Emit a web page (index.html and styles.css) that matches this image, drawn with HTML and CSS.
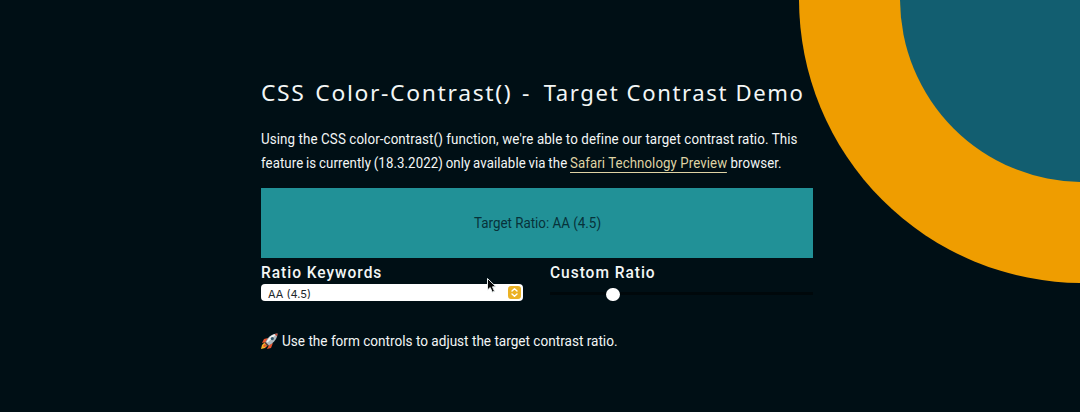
FILE: index.html
```html
<!DOCTYPE html>
<html lang="en">
<head>
<meta charset="utf-8">
<title>CSS Color-Contrast() - Target Contrast Demo</title>
<link rel="stylesheet" href="styles.css">
</head>
<body>
<svg class="ring" width="281" height="284" viewBox="0 0 281 284"><circle cx="284" cy="-1" r="284" fill="#ef9d00"/><circle cx="284" cy="-1" r="183" fill="#125e70"/></svg>
<main class="demo">
  <h1 class="title"><span class="title-start">CSS Color-Contrast() - </span><span class="title-end">Target Contrast Demo</span></h1>
  <p class="intro"><span class="line-one">Using the CSS color-contrast() function, we're able to define our target contrast ratio. This</span><br><span class="line-two"><span class="lead">feature is currently (18.3.2022) only available via the </span><a class="link">Safari Technology Preview</a> browser.</span></p>
  <div class="swatch"><span>Target Ratio: AA (4.5)</span></div>
  <div class="controls">
    <div class="field">
      <div class="label"><span>Ratio Keywords</span></div>
      <div class="select"><span>AA (4.5)</span>
        <svg class="stepper" width="13" height="13" viewBox="0 0 13 13"><path d="M4 5 6.5 2.7 9 5M4 8 6.5 10.3 9 8"/></svg>
      </div>
    </div>
    <div class="field">
      <div class="label"><span>Custom Ratio</span></div>
      <div class="slider"><div class="thumb"></div></div>
    </div>
  </div>
  <p class="hint">
    <svg class="rocket" width="17" height="17" viewBox="0 0 17 17">
      <path fill="#f7b52b" d="M4 9 1 12 0 16 4 15 6 13Z"/>
      <path fill="#e9532c" d="M7 5 3 6 1 10 5 9ZM12 10 10 15 6 16 8 12ZM4 11 2 13 3 14 6 13Z"/>
      <path fill="#aeb8bd" d="M16.5.5C12 .6 9 2.6 6.600 5.600L4 10 7 13 11 10.400C14.500 7.500 16.300 5 16.500.5Z"/>
      <path fill="#f1f3f3" d="M14 1C10.500 1.800 8 4.500 5.500 8.500L6.500 9.500 14.500 2Z"/>
      <path fill="#c94a35" d="M16.500.5 13.500 1 16 3.500Z"/>
      <circle cx="11.300" cy="5.600" r="1.600" fill="#31576b"/>
      <path fill="#5c3830" d="M4.500 9 8 12.500 7 13.500 3.500 10Z"/>
    </svg><span>Use the form controls to adjust the target contrast ratio.</span></p>
</main>
<svg class="cursor" width="12" height="17" viewBox="0 0 12 17"><path d="M1.500 1.500V13L4.200 10.600 6.300 15.200 8.500 14.200 6.500 9.800H10Z"/></svg>
</body>
</html>
```
FILE: styles.css
```css
body { margin: 0; height: 412px; position: relative; overflow: hidden; background: #000f15; color: #f3f6f6; font-family: Roboto, "Liberation Sans", sans-serif; font-size: 14px; }
.ring { position: absolute; right: 0; top: 0; }
.demo { position: relative; box-sizing: border-box; width: 552px; margin-left: 261px; padding-top: 77px; white-space: nowrap; }
.title { display: flex; justify-content: space-between; width: 544px; margin: 0; height: 51px; font: 400 22px/30px "Noto Sans", sans-serif; letter-spacing: 1.6px; }
.line-one, .line-two, .swatch span, .label span, .hint span { display: inline-block; transform-origin: left; }
.title-start { transform: scaleX(1.04); transform-origin: left; word-spacing: 2px; }
.title-end { transform: scaleX(1.005); transform-origin: right; }
.intro { margin: 0; height: 60px; line-height: 23.5px; letter-spacing: .1px; }
.line-one { transform: scaleX(.954); }
.line-two { transform: scaleX(.945); }
.lead { word-spacing: -.7px; }
.link { color: #dfd3a4; border-bottom: 1px solid #dfd3a4; padding-bottom: 1px; }
.swatch { display: flex; align-items: center; justify-content: center; height: 70px; background: #219197; color: #07323a; }
.swatch span { transform: scaleX(.955); transform-origin: center; padding-left: 1px; }
.controls { display: grid; grid-template-columns: 262px 263px; column-gap: 27px; height: 69px; }
.label { height: 26px; font-size: 16px; font-weight: 500; line-height: 29px; letter-spacing: 1px; }
.label span { transform: scaleX(.97); }
.select { display: flex; align-items: center; justify-content: space-between; box-sizing: border-box; height: 17px; padding: 0 2px 0 7px; border-radius: 4px; background: #fff; color: #20282b; font: 11px/17px Inter, sans-serif; }
.select span { padding-top: 3px; }
.stepper { border-radius: 3px; background: #ebb225; }
.stepper path { fill: none; stroke: #fff; stroke-width: 1.4; stroke-linecap: round; stroke-linejoin: round; }
.slider { display: flex; align-items: center; height: 19px; background: linear-gradient(#00080b, #00080b) 0 8px / 100% 3px no-repeat; }
.thumb { width: 13.5px; height: 13.5px; margin: 2px 0 0 56px; border-radius: 50%; background: #fff; }
.hint { display: flex; align-items: center; gap: 4px; height: 28px; margin: 0; }
.hint span { transform: scaleX(.97); }
.cursor { position: absolute; left: 486px; top: 277px; }
.cursor path { fill: #080808; stroke: #e8eeee; stroke-width: 1; }
```
